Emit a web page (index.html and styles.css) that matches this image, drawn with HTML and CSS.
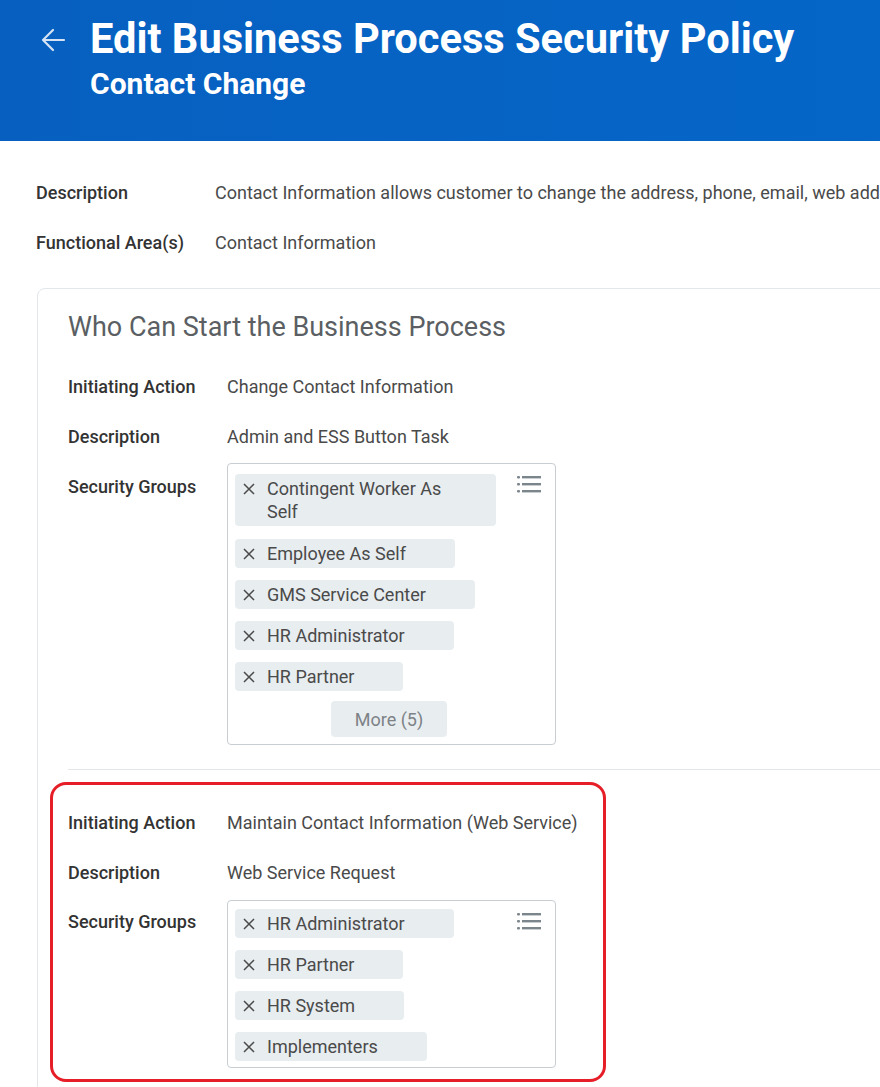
FILE: index.html
```html
<!DOCTYPE html>
<html lang="en">
<head>
<meta charset="utf-8">
<title>Edit Business Process Security Policy</title>
<link rel="stylesheet" href="styles.css">
</head>
<body>
<header class="page-header">
  <button class="back" aria-label="Back">
    <svg width="26" height="24" viewBox="0 0 26 24"><path d="M24 12H3M13 2L3 12l10 10" fill="none" stroke="currentColor" stroke-width="2.2" stroke-linecap="round" stroke-linejoin="round"/></svg>
  </button>
  <div class="titles">
    <h1 class="title">Edit Business Process Security Policy</h1>
    <h2 class="subtitle">Contact Change</h2>
  </div>
</header>

<main class="content">
  <div class="field top">
    <div class="label">Description</div>
    <div class="value nowrap">Contact Information allows customer to change the address, phone, email, web address and instant messenger information for workers</div>
  </div>
  <div class="field top">
    <div class="label">Functional Area(s)</div>
    <div class="value">Contact Information</div>
  </div>

  <section class="card">
    <h3 class="card-title">Who Can Start the Business Process</h3>

    <div class="group">
      <div class="field">
        <div class="label">Initiating Action</div>
        <div class="value">Change Contact Information</div>
      </div>
      <div class="field">
        <div class="label">Description</div>
        <div class="value">Admin and ESS Button Task</div>
      </div>
      <div class="field groups">
        <div class="label">Security Groups</div>
        <div class="multiselect">
          <svg class="list-icon" width="24" height="17" viewBox="0 0 24 17"><g fill="#7b858c"><rect x="0" y="0" width="3" height="2.4" rx="1"/><rect x="5" y="0" width="19" height="2.4"/><rect x="0" y="7" width="3" height="2.4" rx="1"/><rect x="5" y="7" width="19" height="2.4"/><rect x="0" y="14" width="3" height="2.4" rx="1"/><rect x="5" y="14" width="19" height="2.4"/></g></svg>
          <div class="chip"><svg class="x" width="12" height="12" viewBox="0 0 12 12"><path d="M1 1l10 10M11 1L1 11" stroke="#4a4a4a" stroke-width="1.5"/></svg><span class="chip-text">Contingent Worker As Self</span></div>
          <div class="chip"><svg class="x" width="12" height="12" viewBox="0 0 12 12"><path d="M1 1l10 10M11 1L1 11" stroke="#4a4a4a" stroke-width="1.5"/></svg><span class="chip-text">Employee As Self</span></div>
          <div class="chip"><svg class="x" width="12" height="12" viewBox="0 0 12 12"><path d="M1 1l10 10M11 1L1 11" stroke="#4a4a4a" stroke-width="1.5"/></svg><span class="chip-text">GMS Service Center</span></div>
          <div class="chip"><svg class="x" width="12" height="12" viewBox="0 0 12 12"><path d="M1 1l10 10M11 1L1 11" stroke="#4a4a4a" stroke-width="1.5"/></svg><span class="chip-text">HR Administrator</span></div>
          <div class="chip"><svg class="x" width="12" height="12" viewBox="0 0 12 12"><path d="M1 1l10 10M11 1L1 11" stroke="#4a4a4a" stroke-width="1.5"/></svg><span class="chip-text">HR Partner</span></div>
          <div class="more-row"><button class="more">More (5)</button></div>
        </div>
      </div>
    </div>

    <hr class="divider">

    <div class="group highlighted">
      <div class="highlight" aria-hidden="true"></div>
      <div class="field">
        <div class="label">Initiating Action</div>
        <div class="value">Maintain Contact Information (Web Service)</div>
      </div>
      <div class="field">
        <div class="label">Description</div>
        <div class="value">Web Service Request</div>
      </div>
      <div class="field groups second">
        <div class="label">Security Groups</div>
        <div class="multiselect second">
          <svg class="list-icon" width="24" height="17" viewBox="0 0 24 17"><g fill="#7b858c"><rect x="0" y="0" width="3" height="2.4" rx="1"/><rect x="5" y="0" width="19" height="2.4"/><rect x="0" y="7" width="3" height="2.4" rx="1"/><rect x="5" y="7" width="19" height="2.4"/><rect x="0" y="14" width="3" height="2.4" rx="1"/><rect x="5" y="14" width="19" height="2.4"/></g></svg>
          <div class="chip"><svg class="x" width="12" height="12" viewBox="0 0 12 12"><path d="M1 1l10 10M11 1L1 11" stroke="#4a4a4a" stroke-width="1.5"/></svg><span class="chip-text">HR Administrator</span></div>
          <div class="chip"><svg class="x" width="12" height="12" viewBox="0 0 12 12"><path d="M1 1l10 10M11 1L1 11" stroke="#4a4a4a" stroke-width="1.5"/></svg><span class="chip-text">HR Partner</span></div>
          <div class="chip"><svg class="x" width="12" height="12" viewBox="0 0 12 12"><path d="M1 1l10 10M11 1L1 11" stroke="#4a4a4a" stroke-width="1.5"/></svg><span class="chip-text">HR System</span></div>
          <div class="chip"><svg class="x" width="12" height="12" viewBox="0 0 12 12"><path d="M1 1l10 10M11 1L1 11" stroke="#4a4a4a" stroke-width="1.5"/></svg><span class="chip-text">Implementers</span></div>
        </div>
      </div>
    </div>
  </section>
</main>
</body>
</html>
```

FILE: styles.css
```css
html, body {
  margin: 0;
  padding: 0;
  overflow: hidden;
  background: #ffffff;
  font-family: Roboto, "Liberation Sans", Arial, sans-serif;
}

.page-header {
  display: flex;
  align-items: flex-start;
  height: 141px;
  box-sizing: border-box;
  padding: 15px 0 0 40px;
  background: linear-gradient(90deg, #0760c0 0%, #0566c8 100%);
  color: #ffffff;
}

.back {
  display: flex;
  background: none;
  border: 0;
  padding: 0;
  margin: 13px 24px 0 0;
  color: #d5e3f5;
  cursor: pointer;
}

.titles {
  display: flex;
  flex-direction: column;
}

.title {
  margin: 0;
  font-size: 41.6px;
  line-height: 48px;
  font-weight: 700;
  white-space: nowrap;
}

.subtitle {
  margin: 4px 0 0;
  font-size: 30px;
  line-height: 34px;
  font-weight: 700;
  white-space: nowrap;
}

.content {
  width: 1400px;
  padding: 40px 0 0 36px;
}

.field {
  display: flex;
  align-items: flex-start;
  font-size: 18px;
  line-height: 24px;
}

.field + .field {
  margin-top: 26px;
}

.label {
  flex: 0 0 159px;
  color: #333333;
  font-weight: 500;
}

.field.top .label {
  flex-basis: 179px;
}

.value {
  color: #4a4a4a;
}

.nowrap {
  white-space: nowrap;
}

.card {
  margin: 33px 0 0 1px;
  border: 1px solid #e3e7ea;
  border-radius: 8px;
  padding: 22px 0 40px 30px;
  min-height: 900px;
}

.card-title {
  margin: 0 0 32px;
  font-size: 27px;
  line-height: 32px;
  font-weight: 400;
  color: #5b5f63;
}

.field.groups {
  margin-top: 14px;
}

.field.groups .label {
  padding-top: 12px;
}

.field.groups.second {
  margin-top: 15px;
}

.field.groups.second .label {
  padding-top: 10px;
}

.multiselect {
  position: relative;
  border: 1px solid #c7ced3;
  border-radius: 4px;
  padding: 10px 0 7px 7px;
  box-sizing: border-box;
  width: 329px;
  display: flex;
  flex-direction: column;
  align-items: flex-start;
  gap: 12px;
}

.multiselect.second {
  padding-top: 8px;
  padding-bottom: 6px;
}

.list-icon {
  position: absolute;
  top: 12px;
  right: 14px;
}

.chip {
  display: flex;
  align-items: flex-start;
  max-width: 261px;
  box-sizing: border-box;
  padding: 3px 49px 3px 8px;
  background: #e8edf0;
  border-radius: 4px;
  color: #4a4a4a;
  font-size: 18px;
  line-height: 23px;
}

.chip:first-of-type + .chip {
  margin-top: 1px;
}

.multiselect.second .chip:first-of-type + .chip {
  margin-top: 0;
}

.x {
  flex: 0 0 12px;
  margin: 6px 12px 0 0;
}

.chip-text {
  white-space: normal;
}

.more-row {
  align-self: stretch;
  display: flex;
  justify-content: center;
  margin-top: -2px;
  padding-right: 12px;
}

.more {
  width: 116px;
  height: 36px;
  border: 0;
  border-radius: 4px;
  background: #e8edf0;
  color: #7d8287;
  font-family: inherit;
  font-size: 18px;
}

.divider {
  margin: 24px 0 0;
  border: 0;
  border-top: 1px solid #e3e7ea;
}

.group.highlighted {
  position: relative;
  padding-top: 41px;
}

.highlight {
  position: absolute;
  top: 12px;
  left: -18px;
  width: 556px;
  height: 300px;
  box-sizing: border-box;
  border: 3px solid #e61e28;
  border-radius: 16px;
  pointer-events: none;
}
```
